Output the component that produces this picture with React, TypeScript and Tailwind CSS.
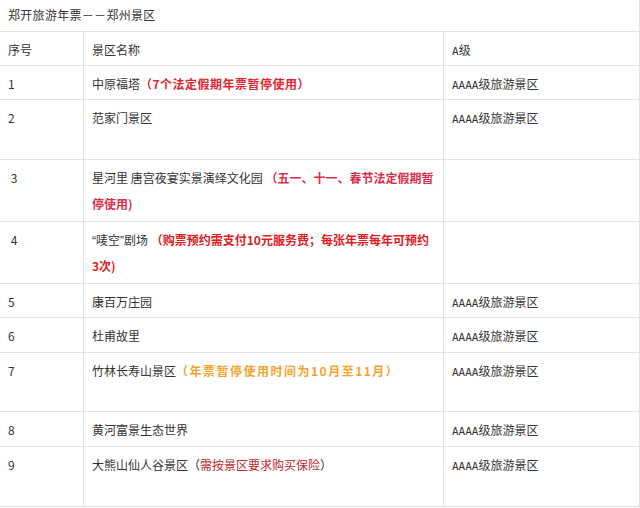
import React from "react";

type Row = {
  no: string;
  name: React.ReactNode;
  level: boolean;
  extra?: boolean;
  h: string;
};

const Q = ({ children }: { children: React.ReactNode }) => (
  <span className="leading-none" style={{ fontFamily: '"Liberation Sans", sans-serif' }}>
    {children}
  </span>
);

const rows: Row[] = [
  {
    no: "1",
    name: (
      <>
        中原福塔<span className="font-bold tracking-[0.5px] text-[#e0262f]">（7个法定假期年票暂停使用）</span>
      </>
    ),
    level: true,
    h: "min-h-[34px]",
  },
  { no: "2", name: "范家门景区", level: true, extra: true, h: "min-h-[60px]" },
  {
    no: " 3",
    name: (
      <>
        星河里 唐宫夜宴实景演绎文化园 <span className="font-bold text-[#d9304c]">（五一、十一、春节法定假期暂停使用)</span>
      </>
    ),
    level: false,
    h: "min-h-[62px]",
  },
  {
    no: " 4",
    name: (
      <>
        <Q>“</Q>唛空<Q>”</Q>剧场 <span className="font-bold text-[#e0201f]">（购票预约需支付10元服务费；每张年票每年可预约3次)</span>
      </>
    ),
    level: false,
    h: "min-h-[62px]",
  },
  { no: "5", name: "康百万庄园", level: true, h: "min-h-[34px]" },
  { no: "6", name: "杜甫故里", level: true, h: "min-h-[35px]" },
  {
    no: "7",
    name: (
      <>
        竹林长寿山景区<span className="font-bold tracking-[1.5px] text-[#f2a431]">（年票暂停使用时间为10月至11月）</span>
      </>
    ),
    level: true,
    extra: true,
    h: "min-h-[59px]",
  },
  { no: "8", name: "黄河富景生态世界", level: true, h: "min-h-[35px]" },
  {
    no: "9",
    name: (
      <>
        大熊山仙人谷景区（<span className="text-[#c0282d]">需按景区要求购买保险</span>）
      </>
    ),
    level: true,
    extra: true,
    h: "min-h-[60px]",
  },
];

const cell = "border-r border-b border-[#e3e3e3] px-2 pt-[5px] pb-[2px] leading-[26px]";

const Mono = ({ children }: { children: React.ReactNode }) => (
  <span className="text-[11px] leading-none" style={{ fontFamily: '"DejaVu Sans Mono", monospace' }}>
    {children}
  </span>
);

const Level = () => (
  <>
    <Mono>AAAA</Mono>级旅游景区
  </>
);

export default function App() {
  return (
    <div
      className="w-[640px] h-[508px] bg-white text-[12px] text-[#333] overflow-hidden"
      style={{ fontFamily: '"Noto Sans CJK SC", "Noto Sans", sans-serif' }}
    >
      <div className="border-r border-b border-[#e3e3e3] h-[32px] px-2 leading-[30px] tracking-[0.3px]">
        郑开旅游年票－－郑州景区
      </div>
      <div className="grid grid-cols-[84px_360px_196px]">
        <div className={`${cell} min-h-[34px]`}>序号</div>
        <div className={`${cell} min-h-[34px]`}>景区名称</div>
        <div className={`${cell} min-h-[34px]`}>
          <Mono>A</Mono>级
        </div>
        {rows.map((r, i) => (
          <React.Fragment key={i}>
            <div className={`${cell} ${r.h} whitespace-pre`}>{r.no}</div>
            <div className={`${cell} ${r.h}`}>
              <div>{r.name}</div>
            </div>
            <div className={`${cell} ${r.h}`}>{r.level ? <Level /> : null}</div>
          </React.Fragment>
        ))}
      </div>
    </div>
  );
}
